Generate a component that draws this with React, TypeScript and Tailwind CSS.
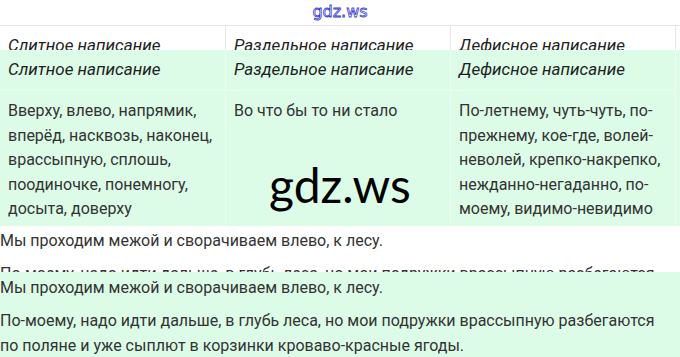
const head = ["Слитное написание", "Раздельное написание", "Дефисное написание"];

const body = [
  [
    "Вверху, влево, напрямик,",
    "вперёд, насквозь, наконец,",
    "врассыпную, сплошь,",
    "поодиночке, понемногу,",
    "досыта, доверху",
  ],
  ["Во что бы то ни стало"],
  [
    "По-летнему, чуть-чуть, по-",
    "прежнему, кое-где, волей-",
    "неволей, крепко-накрепко,",
    "нежданно-негаданно, по-",
    "моему, видимо-невидимо",
  ],
];

function Table({ line }: { line: string }) {
  return (
    <div className={`grid grid-cols-3 w-[676px] border-r ${line}`}>
      {head.map((h, i) => (
        <div
          key={h}
          className={`px-2 pt-[7px] pb-[9px] text-[17px] leading-6 italic text-[#222] border-b ${line} ${i ? "border-l" : ""}`}
        >
          {h}
        </div>
      ))}
      {body.map((cell, i) => (
        <div
          key={i}
          className={`px-2 pt-2 pb-[3px] leading-[24.5px] text-[#333] ${line} ${i ? "border-l" : ""}`}
        >
          {cell.map((l) => (
            <div key={l}>{l}</div>
          ))}
        </div>
      ))}
    </div>
  );
}

function Text() {
  return (
    <div className="text-[#333] leading-[25px]">
      <p>Мы проходим межой и сворачиваем влево, к лесу.</p>
      <p className="mt-2">
        По-моему, надо идти дальше, в глубь леса, но мои подружки врассыпную разбегаются
        <br />
        по поляне и уже сыплют в корзинки кроваво-красные ягоды.
      </p>
    </div>
  );
}

export default function App() {
  return (
    <div className="relative w-[680px] h-[357px] overflow-hidden bg-white font-['Roboto',sans-serif] text-[16px]">
      <div className="h-[25px] flex justify-center pt-[2px]">
        <span className="font-['DejaVu_Sans',sans-serif] text-[16px] leading-5 text-white [-webkit-text-stroke:0.8px_#3b3bd0]">
          gdz.ws
        </span>
      </div>

      <div className="h-[25px] overflow-hidden border-t border-[#e6e6e6]">
        <Table line="border-[#e6e6e6]" />
      </div>

      <div className="h-[176px] overflow-hidden bg-[#dcfce7]">
        <Table line="border-[#ecfcf2]" />
      </div>

      <div className="h-[46px] overflow-hidden pt-[2px]">
        <Text />
      </div>

      <div className="h-[85px] overflow-hidden bg-[#dcfce7] pt-[3px]">
        <Text />
      </div>

      <div className="absolute left-1/2 top-[161px] -translate-x-1/2 font-['Lato',sans-serif] text-[48px] leading-[48px] text-black">
        gdz.ws
      </div>
    </div>
  );
}
